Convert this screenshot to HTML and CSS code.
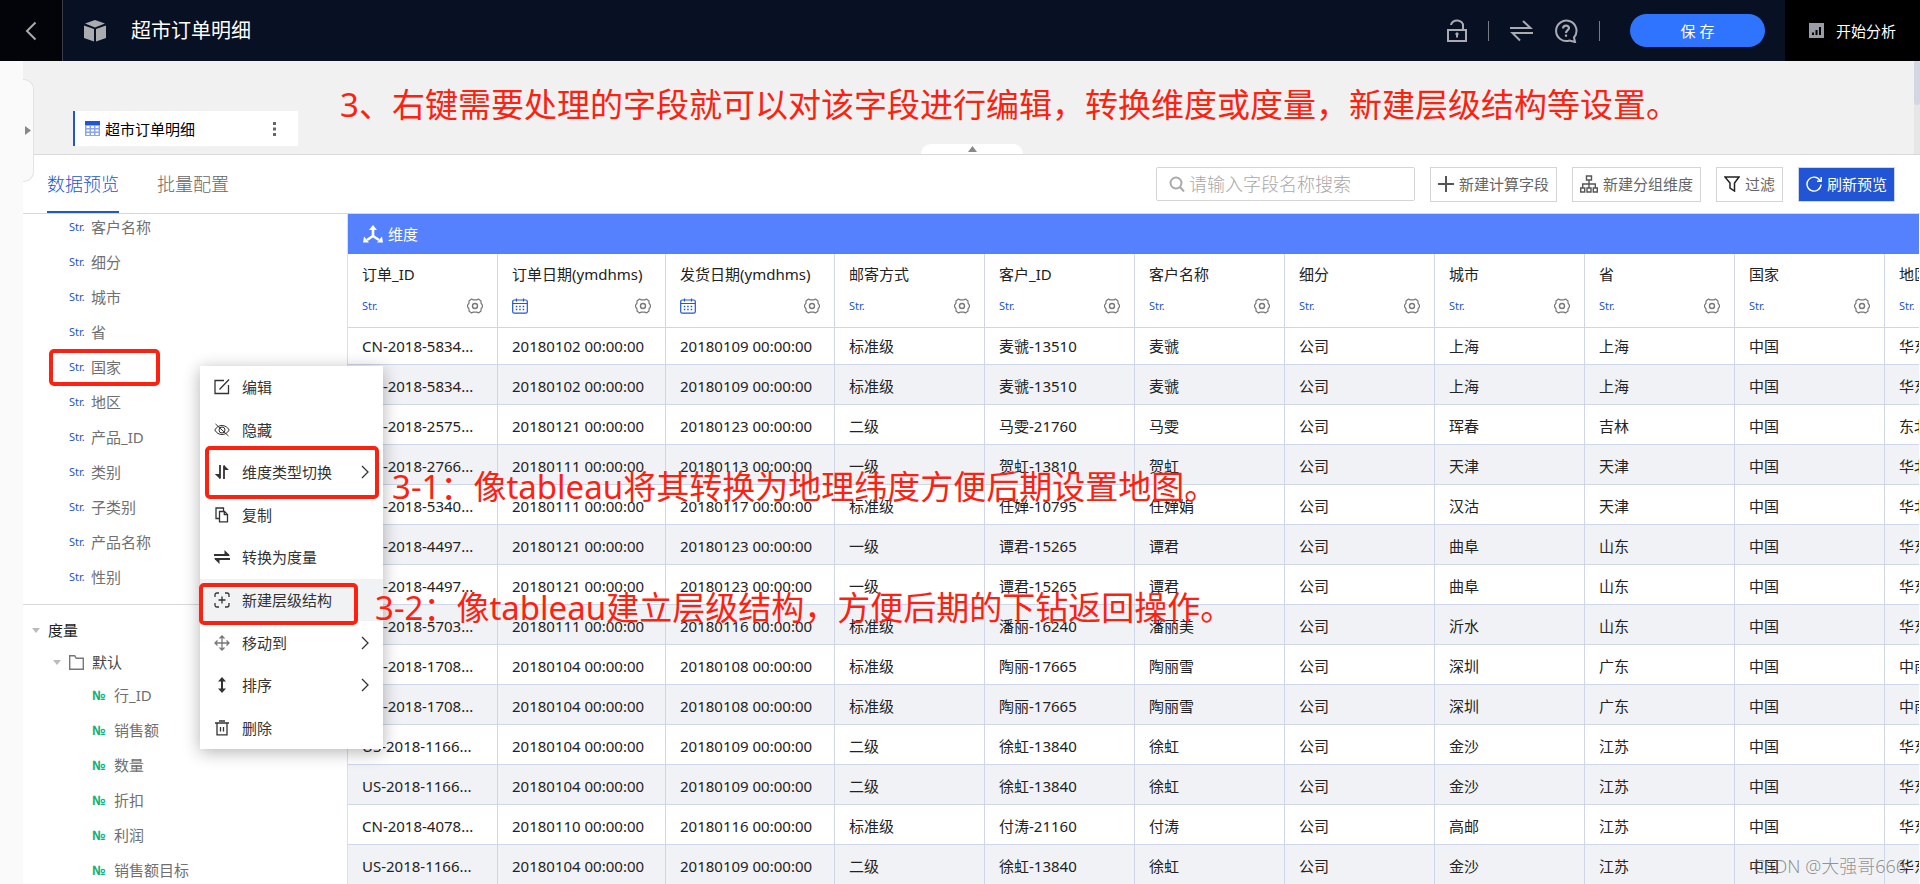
FILE: index.html
```html
<!DOCTYPE html>
<html lang="zh-CN">
<head>
<meta charset="utf-8">
<title>超市订单明细</title>
<link rel="stylesheet" href="styles.css">
</head>
<body>
<svg class="defs" aria-hidden="true">
  <symbol id="gear" viewBox="0 0 16 16"><path d="M4.500 1 6.200 1.900h3.600L11.500 1 14 3v2.200l1.400 2v1.600l-1.400 2V13l-2.500 2-1.700-.9H6.200L4.500 15 2 13v-2.200l-1.400-2V7.200l1.400-2V3z" fill="none" stroke="currentColor" stroke-width="1.200" stroke-linejoin="round"/><circle cx="8" cy="8" r="2.500" fill="none" stroke="currentColor" stroke-width="1.400"/></symbol>
  <symbol id="cal" viewBox="0 0 16 16"><rect x=".7" y="2" width="14.600" height="13.200" rx="1.600" fill="none" stroke="currentColor" stroke-width="1.200"/><path d="M1 5.500h14M4.500.5v3M11.500.5v3" stroke="currentColor" stroke-width="1.200"/><path d="M3.800 8.500h1.500M7.200 8.500h1.500M10.700 8.500h1.500M3.800 11.500h1.500M7.200 11.500h1.500M10.700 11.500h1.500" stroke="currentColor" stroke-width="1.500"/></symbol>
  <symbol id="next" viewBox="0 0 8 14"><path d="m1 1 6 6-6 6" fill="none" stroke="currentColor" stroke-width="1.300"/></symbol>
</svg>

<header class="topbar">
  <button class="back" aria-label="返回"><svg width="12" height="20" viewBox="0 0 12 20"><path d="M10.500 1.500 2 10l8.500 8.500" fill="none" stroke="currentColor" stroke-width="2"/></svg></button>
  <svg class="cube" width="22" height="22" viewBox="0 0 22 22" fill="currentColor"><path d="M11 0 21 3.500 11 7.500 1 3.500zM0 5.500l10 3.500v12.500L0 18zM22 5.500 12 9v12.500L22 18z"/></svg>
  <h1 class="title">超市订单明细</h1>
  <div class="tools">
    <button class="tool" aria-label="解锁"><svg width="20" height="24" viewBox="0 0 20 24" fill="none" stroke="currentColor" stroke-width="2"><rect x="1" y="11" width="18" height="11"/><path d="M4 6a6 5 0 0 1 12 1v4"/><path d="M10 13.500v5M8.500 15h3"/></svg></button>
    <span class="sep"></span>
    <button class="tool" aria-label="切换"><svg width="23" height="22" viewBox="0 0 23 22" fill="none" stroke="currentColor" stroke-width="2"><path d="M0 8h20.500L13 1M23 13H2.500L10 20.500"/></svg></button>
    <button class="tool" aria-label="帮助"><svg width="24" height="24" viewBox="0 0 24 24" fill="none" stroke="currentColor" stroke-width="2"><path d="M20 18.500A10.200 10.200 0 1 0 15.500 21.500L21 23z"/><path d="M9 9.500c.2-4 6.200-3.500 6-.3-.2 2-3 2-3 4.800M12 15.500v2.300" stroke-width="2.200"/></svg></button>
    <span class="sep"></span>
  </div>
  <button class="save">保 存</button>
  <button class="analyze"><svg width="15" height="15" viewBox="0 0 15 15"><path d="M0 0h15v15H0z" fill="#9a9da5"/><path d="M4 12V9.500M7.500 12V7M11 12V4" stroke="#000" stroke-width="2"/></svg>开始分析</button>
</header>

<div class="shell">
  <aside class="rail"></aside>
  <main class="main">
    <section class="canvas">
      <div class="node">
        <svg width="15" height="15" viewBox="0 0 15 15"><path d="M0 0h15v15H0z" fill="#8aa5ec"/><path d="M0 0h15v4H0z" fill="#2155d6"/><path d="M1.500 5h3v2h-3zM6 5h3v2H6zM10.500 5h3v2h-3zM1.500 8.500h3v2h-3zM6 8.500h3v2H6zM10.500 8.500h3v2h-3zM1.500 12h3v2h-3zM6 12h3v2H6zM10.500 12h3v2h-3z" fill="#fff"/></svg>
        <span>超市订单明细</span>
        <button class="more" aria-label="更多"><svg width="3" height="14" viewBox="0 0 3 14" fill="#666"><path d="M0 0h3v3H0zM0 5.500h3v3H0zM0 11h3v3H0z"/></svg></button>
      </div>
      <div class="scroll"></div>
      <button class="fold" aria-label="收起"><svg width="9" height="6" viewBox="0 0 9 6"><path d="M4.500 0 9 6H0z" fill="#888"/></svg></button>
    </section>

    <nav class="tabbar">
      <a class="tab tab-on" href="#preview">数据预览</a>
      <a class="tab" href="#batch">批量配置</a>
      <div class="actions">
        <label class="search"><svg width="16" height="16" viewBox="0 0 16 16" fill="none" stroke="#aaa" stroke-width="2"><circle cx="7" cy="7" r="5.500"/><path d="m11 11 4 4.500"/></svg><input type="text" placeholder="请输入字段名称搜索" aria-label="搜索字段"></label>
        <button class="btn"><svg width="16" height="16" viewBox="0 0 16 16"><path d="M8 0v16M0 8h16" stroke="#555" stroke-width="2"/></svg>新建计算字段</button>
        <button class="btn"><svg width="18" height="18" viewBox="0 0 18 18" fill="none" stroke="#555" stroke-width="1.400"><path d="M6.500 1h5v4h-5zM.7 13h4v4h-4zM7 13h4v4H7zM13.300 13h4v4h-4zM9 5v8M2.700 13V9h12.600v4"/></svg>新建分组维度</button>
        <button class="btn"><svg width="16" height="16" viewBox="0 0 16 16" fill="none" stroke="#222" stroke-width="1.500"><path d="M1 1h14l-4.500 6v8L6 12V7z"/></svg>过滤</button>
        <button class="btn btn-main"><svg width="16" height="16" viewBox="0 0 16 16" fill="none" stroke="currentColor" stroke-width="1.400"><path d="M14 4.500A7 7 0 1 0 15 8.500M15.200 1v4.200H11"/></svg>刷新预览</button>
      </div>
    </nav>

    <div class="work">
      <section class="fields">
        <ul class="list dims">
          <li><i class="str">Str.</i>客户名称</li>
          <li><i class="str">Str.</i>细分</li>
          <li><i class="str">Str.</i>城市</li>
          <li><i class="str">Str.</i>省</li>
          <li><i class="str">Str.</i>国家</li>
          <li><i class="str">Str.</i>地区</li>
          <li><i class="str">Str.</i>产品_ID</li>
          <li><i class="str">Str.</i>类别</li>
          <li><i class="str">Str.</i>子类别</li>
          <li><i class="str">Str.</i>产品名称</li>
          <li><i class="str">Str.</i>性别</li>
        </ul>
        <div class="group"><svg width="8" height="5" viewBox="0 0 8 5"><path d="M0 0h8L4 5z" fill="#bbb"/></svg>度量</div>
        <div class="group group-sub"><svg width="8" height="5" viewBox="0 0 8 5"><path d="M0 0h8L4 5z" fill="#bbb"/></svg><svg width="15" height="15" viewBox="0 0 15 15"><path d="M.7 14.300V.7h5l1.500 2.600h7.100v11z" fill="none" stroke="#777" stroke-width="1.400"/></svg>默认</div>
        <ul class="list nums">
          <li><i class="num">№</i>行_ID</li>
          <li><i class="num">№</i>销售额</li>
          <li><i class="num">№</i>数量</li>
          <li><i class="num">№</i>折扣</li>
          <li><i class="num">№</i>利润</li>
          <li><i class="num">№</i>销售额目标</li>
        </ul>
      </section>

      <section class="preview">
        <div class="band"><svg width="20" height="18" viewBox="0 0 20 18"><path d="M10 4v7.500M10 11 4 15M10 11l6 4" stroke="#fff" stroke-width="2.600" fill="none"/><path d="M10 0l4 5H6zM0 17.500 1 11.500l5 6zM20 17.500l-1-6-5 6z" fill="#fff"/></svg>维度</div>
        <table class="grid">
          <colgroup><col class="w-id"><col class="w-date"><col class="w-ship"><col class="w-id"><col class="w-id"><col class="w-id"><col class="w-id"><col class="w-id"><col class="w-id"><col class="w-id"><col class="w-id"></colgroup>
          <thead><tr>
            <th>订单_ID<div class="meta"><i class="str">Str.</i><svg><use href="#gear"/></svg></div></th>
            <th>订单日期(ymdhms)<div class="meta"><svg class="cal"><use href="#cal"/></svg><svg><use href="#gear"/></svg></div></th>
            <th>发货日期(ymdhms)<div class="meta"><svg class="cal"><use href="#cal"/></svg><svg><use href="#gear"/></svg></div></th>
            <th>邮寄方式<div class="meta"><i class="str">Str.</i><svg><use href="#gear"/></svg></div></th>
            <th>客户_ID<div class="meta"><i class="str">Str.</i><svg><use href="#gear"/></svg></div></th>
            <th>客户名称<div class="meta"><i class="str">Str.</i><svg><use href="#gear"/></svg></div></th>
            <th>细分<div class="meta"><i class="str">Str.</i><svg><use href="#gear"/></svg></div></th>
            <th>城市<div class="meta"><i class="str">Str.</i><svg><use href="#gear"/></svg></div></th>
            <th>省<div class="meta"><i class="str">Str.</i><svg><use href="#gear"/></svg></div></th>
            <th>国家<div class="meta"><i class="str">Str.</i><svg><use href="#gear"/></svg></div></th>
            <th>地区<div class="meta"><i class="str">Str.</i><svg><use href="#gear"/></svg></div></th>
          </tr></thead>
          <tbody>
            <tr><td>CN-2018-5834...</td><td>20180102 00:00:00</td><td>20180109 00:00:00</td><td>标准级</td><td>麦虢-13510</td><td>麦虢</td><td>公司</td><td>上海</td><td>上海</td><td>中国</td><td>华东</td></tr>
            <tr><td>CN-2018-5834...</td><td>20180102 00:00:00</td><td>20180109 00:00:00</td><td>标准级</td><td>麦虢-13510</td><td>麦虢</td><td>公司</td><td>上海</td><td>上海</td><td>中国</td><td>华东</td></tr>
            <tr><td>CN-2018-2575...</td><td>20180121 00:00:00</td><td>20180123 00:00:00</td><td>二级</td><td>马雯-21760</td><td>马雯</td><td>公司</td><td>珲春</td><td>吉林</td><td>中国</td><td>东北</td></tr>
            <tr><td>CN-2018-2766...</td><td>20180111 00:00:00</td><td>20180113 00:00:00</td><td>一级</td><td>贺虹-13810</td><td>贺虹</td><td>公司</td><td>天津</td><td>天津</td><td>中国</td><td>华北</td></tr>
            <tr><td>CN-2018-5340...</td><td>20180111 00:00:00</td><td>20180117 00:00:00</td><td>标准级</td><td>任婵-10795</td><td>任婵娟</td><td>公司</td><td>汉沽</td><td>天津</td><td>中国</td><td>华北</td></tr>
            <tr><td>CN-2018-4497...</td><td>20180121 00:00:00</td><td>20180123 00:00:00</td><td>一级</td><td>谭君-15265</td><td>谭君</td><td>公司</td><td>曲阜</td><td>山东</td><td>中国</td><td>华东</td></tr>
            <tr><td>CN-2018-4497...</td><td>20180121 00:00:00</td><td>20180123 00:00:00</td><td>一级</td><td>谭君-15265</td><td>谭君</td><td>公司</td><td>曲阜</td><td>山东</td><td>中国</td><td>华东</td></tr>
            <tr><td>CN-2018-5703...</td><td>20180111 00:00:00</td><td>20180116 00:00:00</td><td>标准级</td><td>潘丽-16240</td><td>潘丽美</td><td>公司</td><td>沂水</td><td>山东</td><td>中国</td><td>华东</td></tr>
            <tr><td>CN-2018-1708...</td><td>20180104 00:00:00</td><td>20180108 00:00:00</td><td>标准级</td><td>陶丽-17665</td><td>陶丽雪</td><td>公司</td><td>深圳</td><td>广东</td><td>中国</td><td>中南</td></tr>
            <tr><td>CN-2018-1708...</td><td>20180104 00:00:00</td><td>20180108 00:00:00</td><td>标准级</td><td>陶丽-17665</td><td>陶丽雪</td><td>公司</td><td>深圳</td><td>广东</td><td>中国</td><td>中南</td></tr>
            <tr><td>US-2018-1166...</td><td>20180104 00:00:00</td><td>20180109 00:00:00</td><td>二级</td><td>徐虹-13840</td><td>徐虹</td><td>公司</td><td>金沙</td><td>江苏</td><td>中国</td><td>华东</td></tr>
            <tr><td>US-2018-1166...</td><td>20180104 00:00:00</td><td>20180109 00:00:00</td><td>二级</td><td>徐虹-13840</td><td>徐虹</td><td>公司</td><td>金沙</td><td>江苏</td><td>中国</td><td>华东</td></tr>
            <tr><td>CN-2018-4078...</td><td>20180110 00:00:00</td><td>20180116 00:00:00</td><td>标准级</td><td>付涛-21160</td><td>付涛</td><td>公司</td><td>高邮</td><td>江苏</td><td>中国</td><td>华东</td></tr>
            <tr><td>US-2018-1166...</td><td>20180104 00:00:00</td><td>20180109 00:00:00</td><td>二级</td><td>徐虹-13840</td><td>徐虹</td><td>公司</td><td>金沙</td><td>江苏</td><td>中国</td><td>华东</td></tr>
          </tbody>
        </table>
      </section>
    </div>
  </main>
  <button class="expand" aria-label="展开"><svg width="6" height="9" viewBox="0 0 6 9"><path d="M0 0 6 4.500 0 9z" fill="#888"/></svg></button>
</div>

<div class="menu" role="menu">
  <button role="menuitem"><svg viewBox="0 0 16 16"><path d="M10 1.500H1v13h13.500V6M5.500 10.500 15 .5"/></svg>编辑</button>
  <button role="menuitem"><svg viewBox="0 0 16 16" class="thin"><path d="M.8 8C4 2 12 2 15.200 8 12 14 4 14 .8 8zM1.500 2l13 12"/><circle cx="8" cy="8" r="3"/></svg>隐藏</button>
  <button role="menuitem"><svg viewBox="0 0 16 16"><path d="M6 1v13.500M10 15V1.500" stroke-width="1.800"/><path d="M6 15 .8 10H6zM10 1l5 5h-5z" fill="currentColor" stroke="none"/></svg>维度类型切换<svg class="next"><use href="#next"/></svg></button>
  <button role="menuitem"><svg viewBox="0 0 16 16"><path d="M5.500 4.500h5l3 3v7.300h-8zM10.300 4.500V7.700h3.200M5 11.500H2V1h7.500v3"/></svg>复制</button>
  <button role="menuitem"><svg viewBox="0 0 16 16"><path d="M0 6h15M1 10h15" stroke-width="1.800"/><path d="M10.500 1 16 6.500h-5.500zM5.500 15 0 9.500h5.500z" fill="currentColor" stroke="none"/></svg>转换为度量</button>
  <button role="menuitem" class="hot"><svg viewBox="0 0 16 16"><path d="M1 5V3q0-2 2-2h2M11 1h2q2 0 2 2v2M15 11v2q0 2-2 2h-2M5 15H3q-2 0-2-2v-2M8 4.500v7M4.500 8h7"/></svg>新建层级结构</button>
  <button role="menuitem"><svg viewBox="0 0 16 16" class="dim"><path d="M8 1v14M1 8h14M5.500 3.500 8 1l2.500 2.500M5.500 12.500 8 15l2.500-2.500M3.500 5.500 1 8l2.500 2.500M12.500 5.500 15 8l-2.500 2.500"/></svg>移动到<svg class="next"><use href="#next"/></svg></button>
  <button role="menuitem"><svg viewBox="0 0 16 16"><path d="M8 2v12" stroke-width="2"/><path d="M8 0l4 4.500H4zM8 16l4-4.500H4z" fill="currentColor" stroke="none"/></svg>排序<svg class="next"><use href="#next"/></svg></button>
  <button role="menuitem"><svg viewBox="0 0 16 16"><path d="M1 3h14M5 1h6M3 3v11.800h10V3M6.500 7v4.500M9.500 7v4.500"/></svg>删除</button>
</div>

<div class="mark mark-field"></div>
<div class="mark mark-type"></div>
<div class="mark mark-level"></div>
<p class="note note-top">3、右键需要处理的字段就可以对该字段进行编辑，转换维度或度量，新建层级结构等设置。</p>
<p class="note note-type">3-1：像tableau将其转换为地理纬度方便后期设置地图。</p>
<p class="note note-level">3-2：像tableau建立层级结构，方便后期的下钻返回操作。</p>
<p class="credit">CSDN @大强哥666</p>
</body>
</html>
```

FILE: styles.css
```css
* { box-sizing: border-box; }
body {
  margin: 0;
  height: 100vh;
  position: relative;
  overflow: hidden;
  display: flex;
  flex-direction: column;
  background: #fff;
  color: #222;
  font: 400 15px/20px "Noto Sans", "Noto Sans CJK SC", sans-serif;
}
button, input { font: inherit; color: inherit; border: 0; padding: 0; background: none; }
svg { flex: none; display: block; }
i { font-style: normal; }
ul { list-style: none; margin: 0; padding: 0; }
.defs { position: absolute; width: 0; height: 0; }

/* top bar */
.topbar { flex: none; display: flex; align-items: center; height: 61px; background: #081024; color: #fff; }
.back { display: flex; align-items: center; justify-content: center; align-self: stretch; width: 63px; border-right: 1px solid #3a3d47; background: #020409; color: #aaa; }
.cube { margin-left: 21px; color: #abacb0; }
.title { flex: 1; margin: 0 0 0 25px; font-size: 20px; font-weight: 400; line-height: 28px; }
.tools { display: flex; align-items: center; gap: 21px; color: #a9abb1; }
.sep { width: 1px; height: 20px; background: #777b85; }
.save { width: 135px; height: 33px; margin: 0 20px 0 30px; border-radius: 17px; background: #2e74ff; }
.analyze { display: flex; align-items: center; align-self: stretch; gap: 12px; padding: 0 24px; background: #000; }

/* page frame */
.shell { flex: 1; display: flex; min-height: 0; position: relative; }
.rail { flex: none; width: 23px; background: #fafafa; }
.main { flex: 1; min-width: 0; display: flex; flex-direction: column; }
.expand { position: absolute; left: 23px; top: 18px; width: 11px; height: 103px; padding-left: 2px; border: 1px solid #e3e3e3; border-left: 0; border-radius: 0 10px 10px 0; background: #fafafa; }

/* canvas strip */
.canvas { position: relative; flex: none; display: flex; align-items: flex-end; height: 94px; padding: 0 0 8px 50px; border-bottom: 1px solid #d9d9d9; background: #f1f1f1; }
.node { display: flex; align-items: center; gap: 5px; width: 225px; height: 35px; padding: 0 22px 0 10px; border-left: 2px solid #2155d6; background: #fff; color: #000; }
.more { margin-left: auto; }
.scroll { position: absolute; right: 0; top: 0; bottom: 0; width: 6px; background: #e6e6e6; }
.scroll::before { content: ""; display: block; height: 44px; border-radius: 3px; background: #d4d7e2; }
.fold { position: absolute; left: 898px; bottom: 0; display: flex; justify-content: center; width: 102px; height: 10px; padding-top: 2px; border-radius: 10px 10px 0 0; background: #fff; }

/* tabs and actions */
.tabbar { flex: none; display: flex; align-items: stretch; height: 59px; padding: 0 25px 0 24px; border-bottom: 1px solid #d9d9d9; }
.tab { margin-right: 38px; border-bottom: 2px solid transparent; color: #666; font-size: 18px; font-weight: 300; line-height: 58px; text-decoration: none; }
.tab-on { border-color: #2155d6; color: #2155d6; }
.actions { display: flex; align-items: center; gap: 15px; margin-left: auto; }
.search { display: flex; align-items: center; gap: 4px; width: 259px; height: 34px; padding-left: 12px; border: 1px solid #d5d5d5; border-radius: 2px; }
.search input { flex: 1; min-width: 0; font-size: 18px; font-weight: 300; outline: 0; }
.search input::placeholder { color: #a8a8a8; }
.btn { display: flex; align-items: center; gap: 5px; height: 35px; padding: 0 7px; border: 1px solid #d5d5d5; color: #666; }
.btn-main { border-color: #ccd6f2; background: #2155d6; color: #fff; }

/* field tree */
.work { flex: 1; display: flex; min-height: 0; }
.fields { flex: none; width: 325px; overflow: hidden; border-right: 1px solid #dcdfe6; color: #707070; }
.list li { display: flex; align-items: center; height: 35px; }
.dims { margin-top: -5px; padding: 0 0 10px 46px; border-bottom: 1px solid #d9d9d9; }
.nums { margin-top: -1px; padding-left: 69px; }
.str { width: 22px; color: #2155d6; font-size: 11px; line-height: 16px; }
.num { width: 22px; color: #10b37a; font-size: 13px; font-weight: 700; line-height: 16px; }
.group { display: flex; align-items: center; gap: 8px; height: 32px; margin-top: 9px; padding-left: 9px; color: #222; }
.group-sub { margin-top: 0; padding-left: 30px; color: #444; }

/* preview grid */
.preview { flex: 1; min-width: 0; overflow: hidden; margin-right: 1px; }
.band { display: flex; align-items: center; gap: 5px; height: 40px; padding-left: 15px; background: #5581ff; color: #fff; }
.grid { width: 1637px; table-layout: fixed; border-collapse: separate; border-spacing: 0; }
.w-id { width: 150px; }
.w-date { width: 168px; }
.w-ship { width: 169px; }
.grid th, .grid td { padding: 3px 0 0 14px; border: 0 solid #cfd6e8; border-width: 0 1px 1px 0; text-align: left; white-space: nowrap; font-weight: inherit; }
.grid th { height: 74px; padding: 0 14px 3px 14px; }
.grid td { height: 40px; }
.grid tbody tr:first-child td { height: 37px; padding-top: 0; }
.grid tbody tr:nth-child(even) { background: #f1f2f5; }
.meta { display: flex; align-items: center; justify-content: space-between; margin-top: 14px; color: #777; }
.meta svg { width: 16px; height: 16px; }
.meta .cal { color: #2155d6; }

/* context menu */
.menu { position: absolute; left: 200px; top: 366px; display: grid; grid-auto-rows: 1fr; width: 183px; height: 383px; background: #fff; box-shadow: 0 3px 16px rgba(0, 0, 0, .3); }
.menu button { display: flex; align-items: center; gap: 12px; padding: 0 14px; color: #333; }
.menu svg { width: 16px; height: 16px; fill: none; stroke: currentColor; stroke-width: 1.3; }
.menu .dim { color: #777; }
.menu .thin { stroke-width: 1; }
.menu .next { width: 8px; height: 14px; margin-left: auto; }
.menu .hot { background: #f1f2f4; }

/* annotations */
.mark { position: absolute; border: 4px solid #ff2010; border-radius: 5px; }
.mark-field { left: 49px; top: 349px; width: 111px; height: 37px; }
.mark-type { left: 205px; top: 446px; width: 174px; height: 53px; }
.mark-level { left: 199px; top: 583px; width: 159px; height: 42px; }
.note { position: absolute; margin: 0; color: #ff2010; font-size: 33px; line-height: 44px; white-space: nowrap; }
.note-top { left: 340px; top: 83px; }
.note-type { left: 392px; top: 465px; }
.note-level { left: 375px; top: 586px; }
.credit { position: absolute; right: 14px; bottom: 6px; margin: 0; color: rgba(90, 90, 90, .65); font-size: 18px; font-weight: 300; line-height: 24px; }
```
